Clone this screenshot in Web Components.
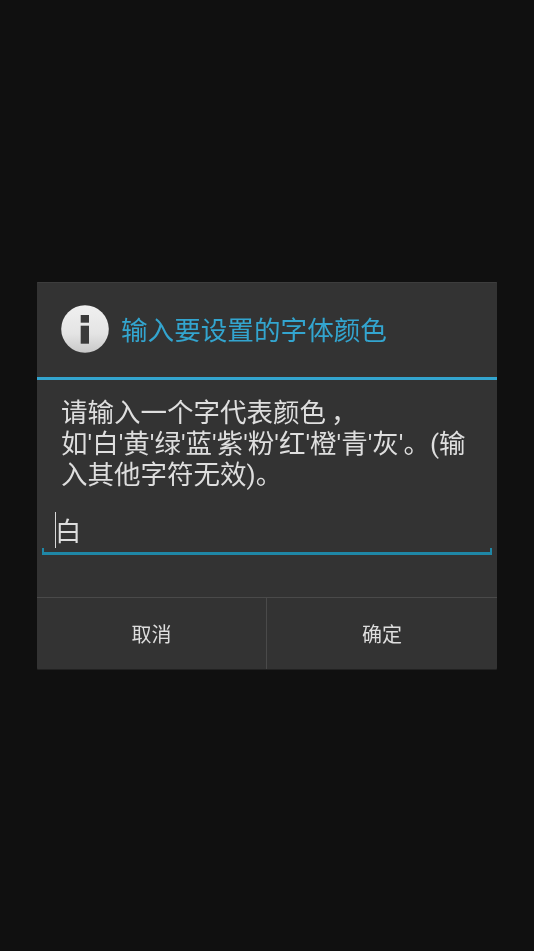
<!DOCTYPE html>
<html>
<head>
<meta charset="utf-8">
<style>
    html, body {
        margin: 0;
        height: 100%;
        background: #101010;
    }
    body {
        display: flex;
        align-items: center;
        justify-content: center;
        font-family: "Roboto", "Noto Sans CJK SC", sans-serif;
    }
    .comma { padding-left: 5px; }
</style>
</head>
<body>
<input-dialog>
    <span slot="title">输入要设置的字体颜色</span>
    <span slot="message">请输入一个字代表颜色<span class="comma">，</span>如'白'黄'绿'蓝'紫'粉'红'橙'青'灰'。(输入其他字符无效)。</span>
    <dialog-field slot="field">白</dialog-field>
    <dialog-button slot="buttons">取消</dialog-button>
    <dialog-button slot="buttons" divider>确定</dialog-button>
</input-dialog>

<script>
    class InputDialog extends HTMLElement {
        constructor() {
            super()
            this.attachShadow({ mode: 'open' })
            this.shadowRoot.innerHTML = `
            <style>
                :host {
                    display: block;
                    width: 460px;
                    height: 387px;
                    background: #333333;
                    box-shadow: inset 0 1px 0 #3d3d3d, 0 1px 0 #222;
                    border-radius: 1px;
                }
                #wrap {
                    display: flex;
                    flex-direction: column;
                    height: 100%;
                    filter: blur(0.3px);
                }
                header {
                    display: flex;
                    align-items: center;
                    gap: 12px;
                    height: 93px;
                    padding: 0 0 2px 24px;
                    border-bottom: 3px solid #33a5cf;
                    color: #33a5cf;
                    font-size: 26.6px;
                }
                svg { display: block; flex: none; }
                #message {
                    padding: 17px 24px 0 24px;
                    color: #dedede;
                    font-size: 26.5px;
                    line-height: 31px;
                    height: 115px;
                }
                #field { padding: 0 5px; }
                #buttons {
                    display: grid;
                    grid-template-columns: 229px 1fr;
                    margin-top: auto;
                    height: 71px;
                    border-top: 1px solid #4a4a4a;
                }
            </style>
            <div id="wrap">
                <header>
                    <svg width="48" height="48" viewBox="0 0 48 48">
                        <defs>
                            <linearGradient id="disc" x1="0" y1="0" x2="0" y2="1">
                                <stop offset="0" stop-color="#f0f0f0"/>
                                <stop offset="0.6" stop-color="#e4e4e4"/>
                                <stop offset="1" stop-color="#c8c8c8"/>
                            </linearGradient>
                        </defs>
                        <circle cx="24" cy="24" r="23.8" fill="url(#disc)"/>
                        <rect x="19.7" y="10" width="8.3" height="7.7" fill="#3a3a3a"/>
                        <rect x="19.7" y="20.7" width="8.3" height="18" fill="#3a3a3a"/>
                    </svg>
                    <slot name="title"></slot>
                </header>
                <div id="message"><slot name="message"></slot></div>
                <div id="field"><slot name="field"></slot></div>
                <div id="buttons"><slot name="buttons"></slot></div>
            </div>
        `
        }
    }

    class DialogField extends HTMLElement {
        constructor() {
            super()
            this.attachShadow({ mode: 'open' })
            this.shadowRoot.innerHTML = `
            <style>
                :host {
                    display: block;
                    position: relative;
                    height: 43px;
                    box-sizing: border-box;
                    padding: 2px 0 0 13px;
                    border-bottom: 3px solid #1f87a6;
                    color: #dedede;
                    font-size: 26.4px;
                    line-height: 36px;
                }
                /* little end ticks of the holo edit line */
                i {
                    position: absolute;
                    bottom: 0;
                    width: 2px;
                    height: 4px;
                    background: #1f87a6;
                }
                #l { left: 0; }
                #r { right: 0; }
                #caret {
                    position: absolute;
                    left: 13px;
                    top: 0;
                    width: 1px;
                    height: 36px;
                    background: #d8d8d8;
                }
            </style>
            <i id="l"></i><i id="r"></i><span id="caret"></span><slot></slot>
        `
        }
    }

    class DialogButton extends HTMLElement {
        constructor() {
            super()
            this.attachShadow({ mode: 'open' })
            this.shadowRoot.innerHTML = `
            <style>
                :host {
                    display: flex;
                    align-items: center;
                    justify-content: center;
                    color: #dedede;
                    font-size: 20px;
                }
                :host([divider]) { border-left: 1px solid #4a4a4a; }
            </style>
            <slot></slot>
        `
        }
    }

    window.customElements.define('input-dialog', InputDialog)
    window.customElements.define('dialog-field', DialogField)
    window.customElements.define('dialog-button', DialogButton)
</script>
</body>
</html>
